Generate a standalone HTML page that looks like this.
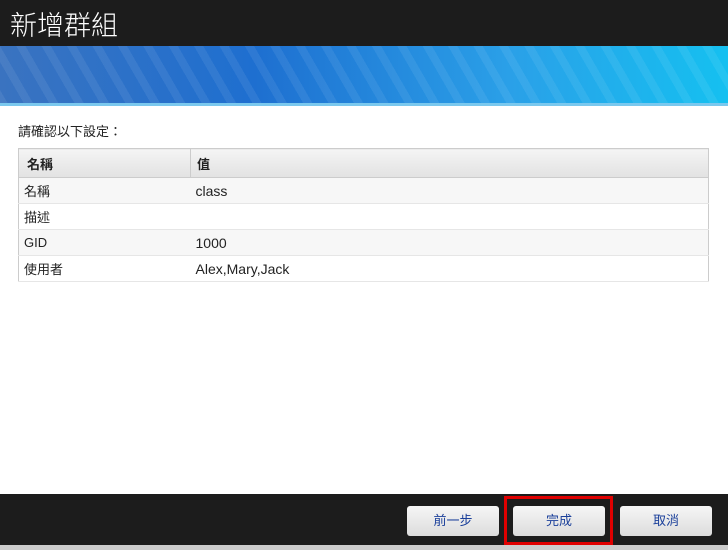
<!DOCTYPE html>
<html><head><meta charset="utf-8"><style>
*{margin:0;padding:0;box-sizing:border-box}
body{width:728px;height:550px;background:#fff;position:relative;overflow:hidden;font-family:"Liberation Sans","Noto Sans CJK TC",sans-serif}
.hd{position:absolute;left:0;top:0;width:728px;height:46px;background:#1c1c1c}
.hd span{position:absolute;left:10px;top:4px;color:#fff;font-size:27px;font-weight:300}
.band{position:absolute;left:0;top:46px;width:728px;height:60px;background:repeating-linear-gradient(60deg,rgba(255,255,255,0.07) 0 8px,rgba(255,255,255,0) 8px 22px),linear-gradient(90deg,#3a73c0 0%,#1e6fd0 35%,#2aa0e8 70%,#15c0f0 100%)}
.band:after{content:"";position:absolute;left:0;bottom:0;width:100%;height:3px;background:#7ac8ee}
.lbl{position:absolute;left:18px;top:121px;font-size:13px;color:#222}
table{position:absolute;left:18px;top:148px;width:691px;border-collapse:collapse;border:1px solid #ccc;font-size:13px;color:#222;table-layout:fixed}
th{height:29px;background:linear-gradient(#f4f4f4,#e2e2e2);text-align:left;padding-left:8px;font-weight:bold;border-bottom:1px solid #ccc}
th+th{border-left:1px solid #ccc;padding-left:6px}
td{height:26px;padding-left:5px;border-bottom:1px solid #e6e6e6;vertical-align:middle}
td+td{padding-left:5px;font-size:14px}
tr.o td{background:#f7f7f7}
.ft{position:absolute;left:0;top:494px;width:728px;height:51px;background:#1c1c1c}
.bot{position:absolute;left:0;top:545px;width:728px;height:5px;background:#ccc}
.btn{position:absolute;top:506px;width:92px;height:30px;border-radius:3px;background:linear-gradient(#f6f6f6,#dcdcdc);color:#1a3f9a;font-size:13px;text-align:center;line-height:30px}
.red{position:absolute;left:504px;top:496px;width:109px;height:49px;border:3px solid #e00000}
</style></head><body>
<div class="hd"><span>新增群組</span></div>
<div class="band"></div>
<div class="lbl">請確認以下設定：</div>
<table>
<tr><th style="width:172px">名稱</th><th>值</th></tr>
<tr class="o"><td>名稱</td><td>class</td></tr>
<tr><td>描述</td><td></td></tr>
<tr class="o"><td>GID</td><td>1000</td></tr>
<tr><td>使用者</td><td>Alex,Mary,Jack</td></tr>
</table>
<div class="ft"></div>
<div class="bot"></div>
<div class="red"></div>
<div class="btn" style="left:407px">前一步</div>
<div class="btn" style="left:513px">完成</div>
<div class="btn" style="left:620px">取消</div>
</body></html>
